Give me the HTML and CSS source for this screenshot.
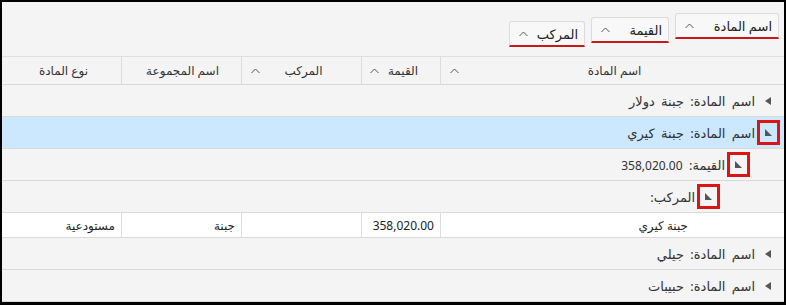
FILE: index.html
```html
<!DOCTYPE html>
<html lang="ar" dir="rtl">
<head>
  <meta charset="UTF-8">
  <meta name="viewport" content="width=device-width, initial-scale=1.0">
  <title>تجميع المواد</title>
  <link rel="stylesheet" href="styles.css">
</head>
<body>
<div class="frame">
  <!-- لوحة التجميع -->
  <div class="group-panel">
    <div class="chip chip-1">
      <span class="chip-text">اسم المادة</span>
      <svg class="sort" width="9" height="6" viewBox="0 0 9 6"><polyline points="0.5,5 4.5,1 8.5,5" /></svg>
    </div>
    <div class="chip chip-2">
      <span class="chip-text">القيمة</span>
      <svg class="sort" width="9" height="6" viewBox="0 0 9 6"><polyline points="0.5,5 4.5,1 8.5,5" /></svg>
    </div>
    <div class="chip chip-3">
      <span class="chip-text">المركب</span>
      <svg class="sort" width="9" height="6" viewBox="0 0 9 6"><polyline points="0.5,5 4.5,1 8.5,5" /></svg>
    </div>
  </div>

  <div class="grid">
    <div class="header">
      <div class="hcell"><span class="htext">اسم المادة</span><svg class="sort" width="9" height="6" viewBox="0 0 9 6"><polyline points="0.5,5 4.5,1 8.5,5" /></svg></div>
      <div class="hcell"><span class="htext">القيمة</span><svg class="sort" width="9" height="6" viewBox="0 0 9 6"><polyline points="0.5,5 4.5,1 8.5,5" /></svg></div>
      <div class="hcell"><span class="htext">المركب</span><svg class="sort" width="9" height="6" viewBox="0 0 9 6"><polyline points="0.5,5 4.5,1 8.5,5" /></svg></div>
      <div class="hcell"><span class="htext">اسم المجموعة</span></div>
      <div class="hcell"><span class="htext">نوع المادة</span></div>
    </div>

    <div class="group-row level-1">
      <span class="expander"><svg width="6" height="8" viewBox="0 0 6 8"><polygon points="6,0 6,8 0,4" /></svg></span>
      <span class="group-text">اسم المادة: جبنة دولار</span>
    </div>
    <div class="group-row level-1 selected">
      <span class="expander marked"><svg width="7" height="7" viewBox="0 0 7 7"><polygon points="0,0 0,7 7,7" /></svg></span>
      <span class="group-text">اسم المادة: جبنة كيري</span>
    </div>
    <div class="group-row level-2">
      <span class="expander marked"><svg width="7" height="7" viewBox="0 0 7 7"><polygon points="0,0 0,7 7,7" /></svg></span>
      <span class="group-text">القيمة: <span class="num">358,020.00</span></span>
    </div>
    <div class="group-row level-3">
      <span class="expander marked"><svg width="7" height="7" viewBox="0 0 7 7"><polygon points="0,0 0,7 7,7" /></svg></span>
      <span class="group-text">المركب:</span>
    </div>

    <div class="data-row">
      <div class="cell">جبنة كيري</div>
      <div class="cell num">358,020.00</div>
      <div class="cell"></div>
      <div class="cell">جبنة</div>
      <div class="cell">مستودعية</div>
    </div>

    <div class="group-row level-1">
      <span class="expander"><svg width="6" height="8" viewBox="0 0 6 8"><polygon points="6,0 6,8 0,4" /></svg></span>
      <span class="group-text">اسم المادة: جيلي</span>
    </div>
    <div class="group-row level-1">
      <span class="expander"><svg width="6" height="8" viewBox="0 0 6 8"><polygon points="6,0 6,8 0,4" /></svg></span>
      <span class="group-text">اسم المادة: حبيبات</span>
    </div>
  </div>
</div>
</body>
</html>
```

FILE: styles.css
```css
body {
  margin: 0;
  font-family: "Noto Sans", "DejaVu Sans", sans-serif;
  background-color: #000000;
}
.frame {
  box-sizing: border-box;
  width: 786px;
  height: 305px;
  border: 2px solid #000000;
  border-bottom-width: 3px;
  background-color: #f4f4f4;
  overflow: hidden;
  color: #333333;
}
/* لوحة التجميع */
.group-panel {
  height: 54px;
  display: flex;
  align-items: flex-start;
  gap: 6px;
  padding-right: 5px;
  border-bottom: 1px solid #dedede;
}
.chip {
  box-sizing: border-box;
  height: 26px;
  display: flex;
  align-items: center;
  justify-content: space-between;
  padding: 0 6px 0 9px;
  background-color: #f8f8f8;
  border: 1px solid #dcdcdc;
  border-bottom: 2px solid #c41a1a;
  border-radius: 3px 3px 0 0;
  font-size: 13px;
  color: #222222;
  white-space: nowrap;
}
.chip-1 { width: 104px; margin-top: 11px; }
.chip-2 { width: 78px; margin-top: 15px; }
.chip-3 { width: 76px; margin-top: 19px; }
.sort {
  display: block;
  fill: none;
  stroke: #555555;
  stroke-width: 1;
}
/* الجدول */
.header,
.data-row {
  display: grid;
  grid-template-columns: 344px 79px 120px 120px 1fr;
}
.header {
  height: 27px;
  border-bottom: 1px solid #d9d9d9;
}
.hcell {
  display: grid;
  grid-template-columns: 22px 1fr 26px;
  align-items: center;
  border-left: 1px solid #dcdcdc;
  font-size: 12px;
  color: #333333;
  white-space: nowrap;
}
.hcell:last-child {
  border-left: none;
}
.htext {
  grid-column: 2;
  text-align: center;
}
.hcell .sort {
  grid-column: 3;
  justify-self: center;
}
.group-row {
  box-sizing: border-box;
  height: 32px;
  display: flex;
  align-items: center;
  border-bottom: 1px solid #d9d9d9;
  font-size: 13px;
  word-spacing: 3px;
  color: #333333;
  white-space: nowrap;
}
.group-row.selected {
  background-color: #cce8ff;
}
.level-1 { padding-right: 6px; }
.level-2 { padding-right: 36px; }
.level-3 { padding-right: 66px; }
.expander {
  box-sizing: border-box;
  width: 20px;
  height: 22px;
  display: flex;
  align-items: center;
  justify-content: center;
  margin-left: 3px;
  fill: #555555;
}
.expander.marked {
  width: 23px;
  height: 25px;
  margin-right: -2px;
  margin-left: 2px;
  border: 3px solid #dc1414;
}
.num {
  font-family: "Noto Sans", sans-serif;
  font-size: 12px;
  word-spacing: 0;
}
.data-row {
  box-sizing: border-box;
  height: 25px;
  background-color: #ffffff;
  border-bottom: 1px solid #d9d9d9;
  font-size: 12px;
  color: #222222;
  white-space: nowrap;
}
.data-row .cell {
  display: flex;
  align-items: center;
  padding-right: 6px;
  border-left: 1px solid #dcdcdc;
}
.data-row .cell:first-child {
  padding-right: 96px;
}
.data-row .cell:last-child {
  border-left: none;
}
```
